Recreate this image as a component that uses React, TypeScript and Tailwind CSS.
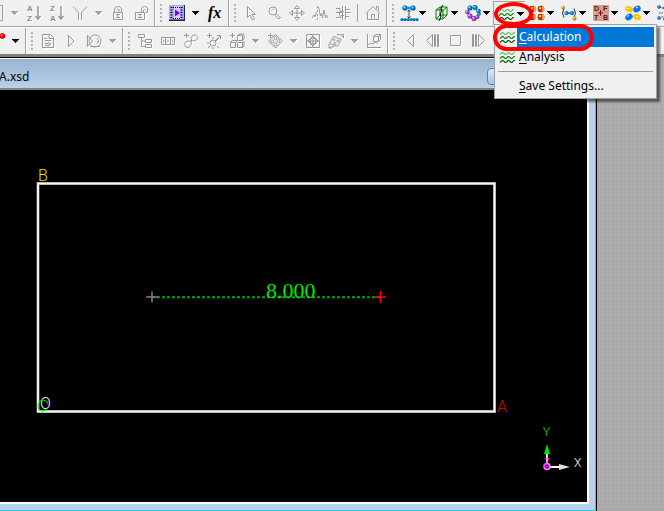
import React from 'react';

type IconProps = { children: React.ReactNode };

// greyed-out toolbar icon with the white embossed edge
const Dim: React.FC<IconProps> = ({ children }) => (
  <svg
    viewBox="0 0 16 16"
    className="h-4 w-4 shrink-0 overflow-visible fill-none stroke-[#989898] drop-shadow-[1px_1px_0_#ffffff]"
    strokeWidth="1"
  >
    {children}
  </svg>
);

const Icon: React.FC<IconProps> = ({ children }) => (
  <svg viewBox="0 0 16 16" className="h-4 w-4 shrink-0 overflow-visible" fill="none">
    {children}
  </svg>
);

const Ball = ({ x, y, r = 2.2, c = '#0090e8', d = '#004a90' }: { x: number; y: number; r?: number; c?: string; d?: string }) => (
  <g>
    <circle cx={x} cy={y} r={r} fill={d} />
    <circle cx={x - 0.3} cy={y - 0.3} r={r - 0.5} fill={c} />
    <circle cx={x - 0.8} cy={y - 0.8} r={r * 0.28} fill="#ffffff" />
  </g>
);

const Tool: React.FC<{ label: string; children: React.ReactNode }> = ({ label, children }) => (
  <button type="button" aria-label={label} className="flex h-6 w-[23px] shrink-0 items-center justify-center">
    {children}
  </button>
);

const Caret: React.FC<{ dim?: boolean }> = ({ dim }) => (
  <svg
    viewBox="0 0 7 4"
    className={dim ? 'h-1 w-[7px] shrink-0 fill-[#a0a0a0] drop-shadow-[1px_1px_0_#ffffff]' : 'h-1 w-[7px] shrink-0 fill-black'}
    shapeRendering="crispEdges"
  >
    <path d="M0 0h7v1H6v1H5v1H4v1H3V3H2V2H1V1H0z" />
  </svg>
);

const DropArrow: React.FC<{ label: string; dim?: boolean }> = ({ label, dim }) => (
  <button type="button" aria-label={label} className="flex h-6 w-[15px] shrink-0 items-center justify-center">
    <Caret dim={dim} />
  </button>
);

const SplitTool: React.FC<{ label: string; children: React.ReactNode }> = ({ label, children }) => (
  <button type="button" aria-label={label} className="flex h-6 w-8 shrink-0 items-center gap-0.5 pl-1">
    {children}
    <Caret />
  </button>
);

const Grip = () => (
  <div className="flex h-full w-[13px] shrink-0 items-center gap-1 pl-0.5">
    <div className="h-full w-0.5 border-l border-r border-l-[#a0a0a0] border-r-white" />
    <div className="grid gap-0.5">
      {[0, 1, 2, 3, 4].map((i) => (
        <div key={i} className="h-0.5 w-0.5 bg-[#b4b4b4]" />
      ))}
    </div>
  </div>
);

const SortIcon: React.FC<{ first: string; second: string }> = ({ first, second }) => (
  <Dim>
    <g className="fill-[#888888] font-['Liberation_Sans'] text-[8px] font-bold" stroke="none">
      <text x="1" y="6">
        {first}
      </text>
      <text x="1" y="16">
        {second}
      </text>
    </g>
    <path d="M12 1v13M9.500 11l2.500 3 2.500-3" strokeWidth="1.500" />
  </Dim>
);

const Waves = () => (
  <Icon>
    <path d="M0 5.500l2-2h1l2 2h1l2-2h1l2 2h1l2-2h1" stroke="#70c070" strokeWidth="1.200" />
    <path d="M0 9.500l2-2h1l2 2h1l2-2h1l2 2h1l2-2h1" stroke="#108810" strokeWidth="1.200" />
    <path d="M0 13.500l2-2h1l2 2h1l2-2h1l2 2h1l2-2h1" stroke="#006000" strokeWidth="1.200" />
  </Icon>
);

const menuItem = 'flex h-5 w-full items-center text-left';

const MenuLabel: React.FC<{ text: string; active?: boolean }> = ({ text, active }) => (
  <span className={active ? 'flex h-5 flex-1 items-center bg-[#0078d7] pl-0.5 text-white' : 'flex h-5 flex-1 items-center pl-0.5'}>
    <span className="whitespace-pre">
      <span className="underline underline-offset-2">{text[0]}</span>
      {text.slice(1)}
    </span>
  </span>
);

const ModuleMenu = () => (
  <div
    role="menu"
    className="absolute left-px top-[23px] z-20 w-[163px] border border-[#a0a0a0] bg-[#f0f0f0] p-0.5 text-xs shadow-[3px_3px_2px_rgba(0,0,0,0.5)]"
  >
    <button type="button" role="menuitem" className={menuItem}>
      <span className="flex w-5 justify-end pr-px">
        <Waves />
      </span>
      <MenuLabel text="Calculation" active />
    </button>
    <button type="button" role="menuitem" className={menuItem}>
      <span className="flex w-5 justify-end pr-px">
        <Waves />
      </span>
      <MenuLabel text="Analysis" />
    </button>
    <div className="mx-px my-1 h-px bg-[#a0a0a0]" />
    <button type="button" role="menuitem" className={menuItem}>
      <span className="w-5" />
      <MenuLabel text="Save Settings..." />
    </button>
    <div className="pointer-events-none absolute -left-0.5 -top-px h-[27px] w-[101px] rounded-full border-4 border-[#fe0000]" />
  </div>
);

const MainToolbar = () => (
  <div className="relative z-10 flex h-[27px] shrink-0 items-center border-b border-[#a0a0a0] bg-[#f0f0f0]">
    <button type="button" aria-label="Clipboard" className="h-4 w-[3px] shrink-0 border-y border-r border-[#a0a0a0]" />
    <div className="w-1 shrink-0" />
    <DropArrow label="Clipboard options" dim />
    <Tool label="Sort ascending">
      <SortIcon first="A" second="Z" />
    </Tool>
    <Tool label="Sort descending">
      <SortIcon first="Z" second="A" />
    </Tool>
    <Tool label="Filter">
      <Dim>
        <path d="M1 1.500l5.500 6V15M15 1.500l-5.500 6V15" />
      </Dim>
    </Tool>
    <DropArrow label="Filter options" dim />
    <Tool label="Lock">
      <Dim>
        <path d="M3.500 7.500h9v7h-9zM4.500 7V4q.5-2.500 3.500-2.500T11.500 4v3M7 4.500q1-1 2 0V7M6 9.500h4M8 9v4M6 12.500h4" />
      </Dim>
    </Tool>
    <Tool label="Unlock">
      <Dim>
        <path d="M2.500 7.500h9v7h-9zM8.500 7V4q0-2.500 3-2.500T14.500 4v3.500h-2M10.500 7V5q1-1 2 0M5 9.500h4M7 9v4M5 12.500h4" />
      </Dim>
    </Tool>
    <Grip />
    <Tool label="Animation">
      <Icon>
        <path d="M0 0h16v16H0z" fill="#202050" />
        <path d="M0 0h15v14.500H0z" fill="#a8a8ff" />
        <path d="M5 1h6v13H5z" fill="#d8d0ff" />
        <path d="M2.500 2v12M12.500 2v12" stroke="#000" strokeWidth="2" strokeDasharray="1 1.500" />
        <path d="M4 2.500h7M4 13.500h7" stroke="#000" strokeDasharray="1 1" />
        <path d="M6 4.500l5 3.500-5 3.500z" fill="#7000f0" />
      </Icon>
    </Tool>
    <DropArrow label="Animation options" />
    <Tool label="Function">
      <Icon>
        <text x="1" y="13" className="fill-black font-['Liberation_Serif'] text-base font-bold italic">
          fx
        </text>
      </Icon>
    </Tool>
    <Grip />
    <Tool label="Select">
      <Dim>
        <path d="M4.500 1.500v11l2.500-2.500 2.500 5 2-1-2.500-4.500h3.500z" />
      </Dim>
    </Tool>
    <Tool label="Zoom">
      <Dim>
        <circle cx="7" cy="6" r="4" />
        <path d="M10 8.500l4.500 4-1.500 1.500-4.500-4M5.500 5.500q.5-1.500 2-1.500" />
      </Dim>
    </Tool>
    <Tool label="Move">
      <Dim>
        <path d="M8 .5l2.500 3h-5zM8 15.500l2.500-3h-5zM.5 8l3-2.500v5zM15.500 8l-3-2.500v5zM8 4v8M4 8h8" />
      </Dim>
    </Tool>
    <Tool label="Peaks">
      <Dim>
        <path d="M0 13l2-3 1 2 1.500-5M5.500 1v2M5.500 5v2M5.500 9v2M5.500 13v2M6.500 2l2 9 1-3 1 5 1.500-8 1.500 8 1-3 1 3" />
      </Dim>
    </Tool>
    <Tool label="Levels">
      <Dim>
        <path d="M1 3.500h4v3h4M1 7.500h6M1 12.500h5v-2h3M7.500 1v14M10.500 1v14M10.500 4.500H15M10.500 7.500H16M10.500 11.500H14M4.500 7.500v3" />
      </Dim>
    </Tool>
    <div className="mx-[3px] h-[18px] w-px shrink-0 bg-[#a0a0a0]" />
    <Tool label="Home">
      <Dim>
        <path d="M1 8.500l7-7 7 7M2.500 8v6.500h11V8M6.500 14.500v-5h3v5M11.500 4V1.500h2V6" />
      </Dim>
    </Tool>
    <Grip />
    <SplitTool label="Adsorption">
      <Icon>
        <Ball x={4} y={3} r={2.6} />
        <Ball x={12} y={3} r={2.6} />
        <path d="M5 3h6" stroke="#0090e8" strokeWidth="2.500" />
        <path d="M8 5v8M6.500 6.500L8 5l1.500 1.500M6.500 11.500L8 13l1.500-1.500" stroke="#404040" />
        {[1, 4, 7, 10, 13, 16].map((x) => (
          <Ball key={x} x={x} y={14.500} r={1.5} />
        ))}
      </Icon>
    </SplitTool>
    <SplitTool label="Amorphous cell">
      <Icon>
        <path d="M3 5l4-3h7v8l-4 4H3zM3 5h7v9M10 5l4-3M7 2v8h7M7 10l-4 4" stroke="#008000" />
        <path d="M10 0L8 3l1 3-2 3 1 3-2 4" stroke="#000" />
      </Icon>
    </SplitTool>
    <SplitTool label="Blends">
      <Icon>
        <Ball x={5} y={3} r={2.5} />
        <Ball x={10} y={2.500} r={2.5} />
        <Ball x={2.500} y={7} c="#b050e0" d="#602080" />
        <Ball x={13.500} y={6} />
        <Ball x={14} y={9} r={1.8} />
        <Ball x={5} y={11} r={2.5} c="#b050e0" d="#602080" />
        <Ball x={9} y={13.500} r={2.5} c="#b050e0" d="#602080" />
        <Ball x={12.500} y={12} r={2} c="#b050e0" d="#602080" />
      </Icon>
    </SplitTool>
    <div className="relative shrink-0">
      <button
        type="button"
        aria-label="CASTEP"
        aria-haspopup="menu"
        aria-expanded="true"
        className="flex h-6 w-8 items-center gap-0.5 border-l border-t border-[#a0a0a0] pl-[5px]"
      >
        <Waves />
        <Caret />
      </button>
      <ModuleMenu />
      <div className="pointer-events-none absolute left-px top-px z-20 h-6 w-[39px] rounded-[50%] border-4 border-[#fe0000]" />
    </div>
    <SplitTool label="Compass">
      <Icon>
        {[3.500, 12].map((x) => (
          <g key={x}>
            <Ball x={x} y={4} r={3.3} c="#c83010" d="#802000" />
            <Ball x={x} y={12} r={3.3} c="#c83010" d="#802000" />
            <path d={`M${x + 1.500} 1.500q2 2.500 0 5M${x + 1.500} 9.500q2 2.500 0 5`} stroke="#ffa030" strokeWidth="2" />
          </g>
        ))}
      </Icon>
    </SplitTool>
    <SplitTool label="Conformers">
      <Icon>
        <path d="M3 3.500q-3 4.500 0 9M13 3.500q3 4.500 0 9" stroke="#203060" />
        <path d="M5 8h6" stroke="#2060b0" strokeWidth="1.500" />
        <Ball x={2} y={2.500} r={1.8} c="#ffc000" d="#a06000" />
        <Ball x={5.500} y={8} r={2} />
        <Ball x={11} y={8} r={2} />
        <Ball x={13.500} y={13.500} r={1.9} c="#ffc000" d="#a06000" />
      </Icon>
    </SplitTool>
    <SplitTool label="DFTB">
      <Icon>
        <path d="M0 0h16v16H0z" fill="#d8a090" />
        <path d="M7.500 5v6M5 8h5" stroke="#701010" />
        <g className="fill-[#601010] font-['Liberation_Sans'] text-[7px] font-bold">
          <text x="1" y="6">D</text>
          <text x="10" y="6">F</text>
          <text x="1" y="15">T</text>
          <text x="10" y="15">B</text>
        </g>
      </Icon>
    </SplitTool>
    <SplitTool label="DMol3">
      <Icon>
        <ellipse cx="4" cy="4" rx="4" ry="3" transform="rotate(25 4 4)" fill="#ffc400" />
        <ellipse cx="12" cy="4" rx="4" ry="3" transform="rotate(-35 12 4)" fill="#0078e0" />
        <ellipse cx="4" cy="12" rx="4" ry="3" transform="rotate(-35 4 12)" fill="#0078e0" />
        <ellipse cx="12" cy="12" rx="4" ry="3" transform="rotate(25 12 12)" fill="#ffc400" />
        <path d="M2 3.500h2M11 3l2-1M2 11.500l2-1M11 11.500h2" stroke="#ffffff" />
      </Icon>
    </SplitTool>
    <SplitTool label="Forcite">
      <Icon>
        <path d="M2 2l7 2M8 3v8M2 8h10M2 13l6-2" stroke="#404040" strokeDasharray="1.500 1" />
        <Ball x={2} y={2} r={1.8} />
        <Ball x={8} y={3} r={1.8} />
        <Ball x={2} y={13} r={1.8} />
        <Ball x={8} y={14} r={1.8} />
      </Icon>
    </SplitTool>
  </div>
);

const SketchToolbar = () => (
  <div className="flex h-[27px] shrink-0 items-center border-t border-white bg-[#f0f0f0]">
    <button type="button" aria-label="Atom" className="flex h-6 w-2 shrink-0 justify-start pt-1">
      <svg viewBox="0 0 6 6" className="h-1.5 w-1.5">
        <Ball x={2.500} y={3} r={2.8} c="#ff0000" d="#b00000" />
      </svg>
    </button>
    <DropArrow label="Atom options" />
    <Grip />
    <Tool label="Script">
      <Dim>
        <path d="M2.500 1.500h8l3 3v10h-11zM9 1.500v4h4M4 5.500h3M5 7.500h6M5 10.500h3v3M8 9.500l3 1.500-3 2M5 12.500h2" />
      </Dim>
    </Tool>
    <Tool label="Play">
      <Dim>
        <path d="M5.500 2.500l5.500 5.500-5.500 5.500z" />
      </Dim>
    </Tool>
    <Tool label="Run on server">
      <Dim>
        <circle cx="9" cy="8" r="6" />
        <path d="M1.500 2.500l5 5.500-5 5.500zM4 13.500h10M11 5.500l2 2.500-2 2.500" />
      </Dim>
    </Tool>
    <DropArrow label="Run options" dim />
    <Grip />
    <Tool label="Tree">
      <Dim>
        <path d="M1.500 1.500h6v3h-6zM8.500 6.500h6v3h-6zM8.500 11.500h6v3h-6zM4.500 4.500v9h4M4.500 8h4" />
      </Dim>
    </Tool>
    <Tool label="Cell">
      <Dim>
        <path d="M1.500 4.500h13v7h-13zM5.500 4.500v7M10.500 4.500v7M3 6.500l1 1.500-1 1.500M7 6.500l1.500 1.500L7 9.500M12 6.500l1 1.500-1 1.500" />
      </Dim>
    </Tool>
    <Tool label="Add polymer">
      <Dim>
        <path d="M1 2.500h5M3.500 0v5M8.500 8q-1-6 3.500-6 3.500.5 2.500 4-1 2-6 2H5q-3.500.5-3.500 3.500.5 3 3.500 3 3.500-.5 3.500-6.500z" />
      </Dim>
    </Tool>
    <Tool label="Add bond">
      <Dim>
        <circle cx="7" cy="10" r="3" />
        <path d="M1 2.500h5M3.500 0v5M9 8l5-5M11 2.500h3.500V6M9.500 8.500l3-3M2 15l2.500-2.500M7 14v2M1 10h2M11 13l2 2M7 4v2" />
      </Dim>
    </Tool>
    <Tool label="Add cells">
      <Dim>
        <path d="M1 2.500h5M3.500 0v5M1.500 9.500h5v5h-5zM8.500 9.500h5v5h-5zM8.500 2.500h5v5h-5zM1.500 9.500l2-2h5M6.500 9.500l2-2M8.500 2.500l1.500-1.500h5v5l-1.500 1.500M13.500 9.500l1.500-1.500v5l-1.500 1.500" />
      </Dim>
    </Tool>
    <DropArrow label="Cell options" dim />
    <Tool label="Add surface">
      <Dim>
        <path d="M1 2.500h5M3.500 0v5M8.500 1.500l7 6.500-7 7-7-7z" />
        <circle cx="8.500" cy="5" r="1.500" />
        <circle cx="5.500" cy="8.500" r="1.500" />
        <circle cx="11.500" cy="8" r="1.500" />
        <circle cx="8.500" cy="11.500" r="1.500" />
      </Dim>
    </Tool>
    <DropArrow label="Surface options" dim />
    <Tool label="Symmetry">
      <Dim>
        <path d="M1.500 1.500h13v13h-13zM8 1.500v13M1.500 8h13M8 3l5 5-5 5-5-5z" />
        <circle cx="8" cy="8" r="3" />
      </Dim>
    </Tool>
    <Tool label="Layers">
      <Dim>
        <path d="M5.500 3.500l8 3-4 7-8-3zM9 1.500h3l3 3M13 1.500h2.500V5M1 11v4h3M1.500 14.500l5-1" />
        <circle cx="6" cy="7" r="1" />
        <circle cx="10" cy="8" r="1" />
        <circle cx="7" cy="10.500" r="1" />
      </Dim>
    </Tool>
    <DropArrow label="Layer options" dim />
    <Tool label="Chart">
      <Dim>
        <path d="M1.500 1v13.500H15M2 12l3-2 2 1 3-2 2 2M7.500 3.500h5v5h-5zM7.500 3.500l2-2h5v5l-2 2M12.500 3.500l2-2" />
      </Dim>
    </Tool>
    <Grip />
    <Tool label="Play backwards">
      <Dim>
        <path d="M11.500 1.500v12l-6-6z" />
      </Dim>
    </Tool>
    <Tool label="Step back">
      <Dim>
        <path d="M7.500 1.500v12l-6-6zM9.500 1.500h1v12h-1zM12.500 1.500h1v12h-1z" />
      </Dim>
    </Tool>
    <Tool label="Stop">
      <Dim>
        <path d="M2.500 2.500h10v10h-10z" />
      </Dim>
    </Tool>
    <Tool label="Step forward">
      <Dim>
        <path d="M7.500 1.500v12l6-6zM1.500 1.500h1v12h-1zM4.500 1.500h1v12h-1z" />
      </Dim>
    </Tool>
    <Tool label="Play forwards">
      <Dim>
        <path d="M5.500 1.500v12l6-6z" />
      </Dim>
    </Tool>
  </div>
);

// 3D viewport: lattice box, distance measurement and axis triad
const Viewport = () => (
  <svg className="min-h-0 w-full flex-1 bg-black font-['Roboto'] text-base font-light" fill="none">
    <rect x="38" y="93.500" width="456.500" height="228" stroke="#808080" strokeWidth="3" />
    <rect x="38" y="93.500" width="456.500" height="228" stroke="#f4f4f4" strokeWidth="2" />
    <path d="M152 207.500h229" stroke="#006000" strokeWidth="2" strokeDasharray="3 2" />
    <path d="M152 207h229" stroke="#00e000" strokeDasharray="3 2" />
    <path d="M146 207h12M152 201.500v11" stroke="#808080" strokeWidth="1.500" />
    <path d="M375 207h11M380.500 201v12" stroke="#ff0000" strokeWidth="1.500" />
    <text x="266" y="208" className="fill-[#00e800] font-['Liberation_Serif'] text-[22px] font-normal">
      8.000
    </text>
    <text x="38" y="91" className="fill-[#e0e000]">B</text>
    <text x="497" y="322" className="fill-[#e00000]">A</text>
    <text x="40" y="319" className="fill-[#f0f0f0]">O</text>
    <path d="M48 314q-1-4-5-4-5 1-5 6 0 5 5 5 3 0 4-3" stroke="#00f000" />
    <path d="M547 376v-14" stroke="#b0ffb0" strokeWidth="2" />
    <path d="M547 354l3 10h-6z" fill="#00e000" />
    <path d="M547 377h14" stroke="#ffffff" strokeWidth="2" />
    <path d="M559 374l11 3-11 3z" fill="#e0e0e0" />
    <circle cx="547" cy="376.500" r="3" fill="#800080" stroke="#ff80ff" strokeWidth="1.500" />
    <g className="text-xs">
      <text x="543" y="346" className="fill-[#00f000]">Y</text>
      <text x="543" y="377" className="fill-[#ff00ff]">Z</text>
      <text x="574" y="377" className="fill-white">X</text>
    </g>
  </svg>
);

const DocumentWindow = () => (
  <section className="flex min-w-0 flex-1 flex-col border-r border-t border-black">
    <div className="flex min-h-0 flex-1 flex-col border-b border-r border-t border-b-[#1fcfe6] border-r-[#1fcfe6] border-t-white bg-[#b9d1ea]">
      <header className="flex h-[29px] shrink-0 items-start justify-between bg-linear-to-b from-[#99b4d1] to-[#b9d1ea] pt-2 pr-1">
        <h1 className="-ml-px text-xs leading-5">A.xsd</h1>
        <button
          type="button"
          aria-label="Minimize"
          className="mt-px h-[17px] w-[104px] rounded-sm border border-[#5f7fa5] bg-linear-to-b from-[#dbe8f6] to-[#a9c4e2]"
        />
      </header>
      <div className="mb-1.5 mr-1.5 flex min-h-0 flex-1 flex-col border-b-2 border-r-2 border-t-2 border-b-white border-r-white border-t-[#808080]">
        <Viewport />
      </div>
    </div>
  </section>
);

const App: React.FC = () => {
  return (
    <div className="flex h-screen flex-col overflow-hidden bg-[#f0f0f0] font-['Noto_Sans',sans-serif] text-black">
      <MainToolbar />
      <SketchToolbar />
      <main className="flex min-h-0 flex-1 border-t-[3px] border-[#808080] bg-[#a9a9a9]">
        <DocumentWindow />
        <div className="w-[67px] shrink-0 bg-[radial-gradient(#aeaeae_1px,transparent_1px)] bg-size-[4px_4px]" />
      </main>
    </div>
  );
};

export default App;
